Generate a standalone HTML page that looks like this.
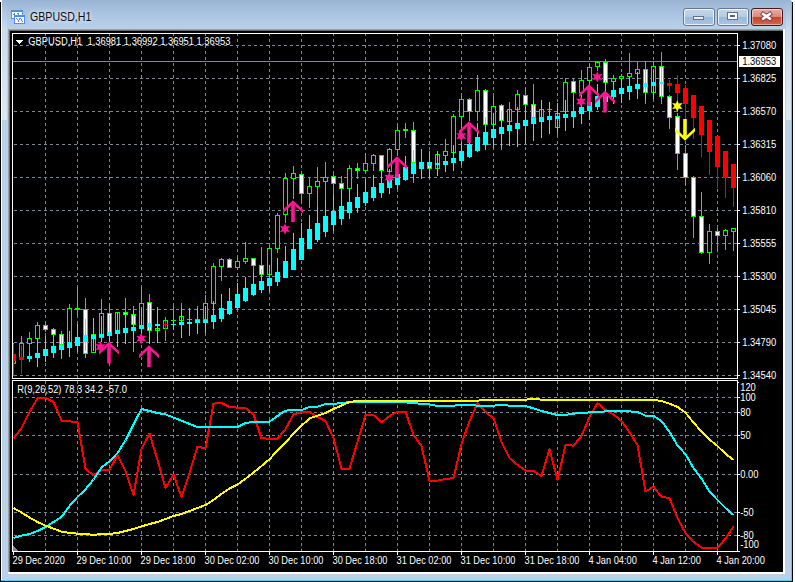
<!DOCTYPE html>
<html><head><meta charset="utf-8"><title>GBPUSD,H1</title>
<style>
html,body{margin:0;padding:0;background:#fff;}
body{width:795px;height:582px;position:relative;overflow:hidden;font-family:"Liberation Sans",sans-serif;}
#win{position:absolute;left:0;top:0;width:793px;height:582px;background:#000;overflow:hidden;}
#frame{position:absolute;left:1px;top:0;width:791px;height:581px;background:#b9d1ea;}
#title{position:absolute;left:1px;top:0;width:791px;height:29px;background:linear-gradient(#9ab5d4,#a9c3e0 45%,#b9d1ea);}
#hl{position:absolute;left:1px;top:0;width:1px;height:581px;background:#fff;}
#hr{position:absolute;left:791px;top:0;width:1px;height:581px;background:#38d8f8;}
#hb{position:absolute;left:1px;top:580px;width:791px;height:1px;background:#38d8f8;}
#sunk{position:absolute;left:8px;top:29px;width:777px;height:545px;background:#fff;}
#sunk1{position:absolute;left:8px;top:29px;width:775px;height:543px;background:#a0a0a0;}
#sunk2{position:absolute;left:9px;top:30px;width:774px;height:542px;background:#696969;}
#client{position:absolute;left:10px;top:31px;width:773px;height:541px;background:#000;}
#ttl{position:absolute;left:30px;top:9px;font-size:12px;line-height:16px;color:#0c0c18;white-space:nowrap;transform-origin:0 0;transform:scaleX(0.885);text-shadow:0 0 5px rgba(255,255,255,.9),0 0 8px rgba(255,255,255,.6);}
.btn{position:absolute;top:8px;width:30px;height:16px;border:1px solid #66788f;border-radius:3px;background:linear-gradient(#c3d6ec 0%,#b4cbe6 48%,#9db9da 52%,#a9c4e2 100%);box-shadow:inset 0 0 0 1px rgba(255,255,255,.75);}
#bx{border-color:#4a1522;background:linear-gradient(#e9aea2 0%,#dc8a79 48%,#c8452a 52%,#d2684c 100%);box-shadow:inset 0 0 0 1px rgba(255,255,255,.45);}
svg{position:absolute;left:0;top:0;}
text{font-family:"Liberation Sans",sans-serif;font-size:10px;fill:#fff;}
</style></head><body>
<div id="win"></div><div id="frame"></div><div id="title"></div>
<div id="hl"></div><div id="hr"></div><div id="hb"></div>
<div id="sunk"></div><div id="sunk1"></div><div id="sunk2"></div><div id="client"></div>
<div style="position:absolute;left:2px;top:0;width:5px;height:120px;background:linear-gradient(rgba(255,255,255,0),rgba(255,255,255,.25) 30%,rgba(255,255,255,.5))"></div>
<div style="position:absolute;left:786px;top:0;width:5px;height:120px;background:linear-gradient(rgba(255,255,255,0),rgba(255,255,255,.25) 30%,rgba(255,255,255,.5))"></div>
<div id="ttl">GBPUSD,H1</div>
<div class="btn" id="bm" style="left:683px"></div>
<div class="btn" id="bq" style="left:717px"></div>
<div class="btn" id="bx" style="left:751px"></div>

<svg width="795" height="582" viewBox="0 0 795 582">
<g shape-rendering="crispEdges">
<rect x="11" y="10" width="12" height="9" fill="#4a86ff"/>
<rect x="12" y="12" width="10" height="6" fill="#fffffa"/>
<rect x="12" y="10" width="1" height="1" fill="#5fa0c8"/>
<rect x="14" y="10" width="1" height="1" fill="#5fa0c8"/>
<rect x="16" y="10" width="1" height="1" fill="#5fa0c8"/>
<rect x="18" y="10" width="1" height="1" fill="#5fa0c8"/>
<rect x="20" y="10" width="1" height="1" fill="#5fa0c8"/>
<rect x="11" y="12" width="1" height="1" fill="#5fa0c8"/>
<rect x="22" y="12" width="1" height="1" fill="#5fa0c8"/>
<rect x="11" y="14" width="1" height="1" fill="#5fa0c8"/>
<rect x="22" y="14" width="1" height="1" fill="#5fa0c8"/>
<rect x="11" y="16" width="1" height="1" fill="#5fa0c8"/>
<rect x="22" y="16" width="1" height="1" fill="#5fa0c8"/>
<rect x="13" y="14" width="1" height="1" fill="#4a86ff"/>
<rect x="14" y="13" width="1" height="1" fill="#4a86ff"/>
<rect x="14" y="14" width="1" height="1" fill="#4a86ff"/>
<rect x="17" y="13" width="1" height="1" fill="#4a86ff"/>
<rect x="18" y="13" width="1" height="1" fill="#4a86ff"/>
<rect x="18" y="14" width="1" height="1" fill="#4a86ff"/>
<rect x="14" y="15" width="11" height="9" fill="#4a86ff"/>
<rect x="15" y="17" width="9" height="6" fill="#fffffa"/>
<rect x="15" y="15" width="1" height="1" fill="#5fa0c8"/>
<rect x="15" y="23" width="1" height="1" fill="#5fa0c8"/>
<rect x="17" y="15" width="1" height="1" fill="#5fa0c8"/>
<rect x="17" y="23" width="1" height="1" fill="#5fa0c8"/>
<rect x="19" y="15" width="1" height="1" fill="#5fa0c8"/>
<rect x="19" y="23" width="1" height="1" fill="#5fa0c8"/>
<rect x="21" y="15" width="1" height="1" fill="#5fa0c8"/>
<rect x="21" y="23" width="1" height="1" fill="#5fa0c8"/>
<rect x="23" y="15" width="1" height="1" fill="#5fa0c8"/>
<rect x="23" y="23" width="1" height="1" fill="#5fa0c8"/>
<rect x="14" y="17" width="1" height="1" fill="#5fa0c8"/>
<rect x="24" y="17" width="1" height="1" fill="#5fa0c8"/>
<rect x="14" y="19" width="1" height="1" fill="#5fa0c8"/>
<rect x="24" y="19" width="1" height="1" fill="#5fa0c8"/>
<rect x="14" y="21" width="1" height="1" fill="#5fa0c8"/>
<rect x="24" y="21" width="1" height="1" fill="#5fa0c8"/>
<rect x="16" y="18" width="1" height="1" fill="#4a86ff"/>
<rect x="17" y="19" width="1" height="1" fill="#4a86ff"/>
<rect x="18" y="20" width="1" height="1" fill="#4a86ff"/>
<rect x="18" y="21" width="1" height="1" fill="#4a86ff"/>
<rect x="19" y="19" width="1" height="1" fill="#4a86ff"/>
<rect x="19" y="18" width="1" height="1" fill="#4a86ff"/>
<rect x="20" y="18" width="1" height="1" fill="#4a86ff"/>
<rect x="21" y="19" width="1" height="1" fill="#4a86ff"/>
<rect x="21" y="20" width="1" height="1" fill="#4a86ff"/>
<rect x="22" y="21" width="1" height="1" fill="#4a86ff"/>
</g>
<g>
<g shape-rendering="crispEdges">
<rect x="693" y="16" width="11" height="4" fill="#62718a"/>
<rect x="694" y="17" width="9" height="2" fill="#eef0f3"/>
<rect x="727" y="12" width="11" height="8" fill="#62718a"/>
<rect x="728" y="13" width="9" height="6" fill="#fff"/>
<rect x="730" y="15" width="5" height="2" fill="#52627c"/>
</g>
<path d="M763.2 14 L769.8 18.6 M769.8 14 L763.2 18.6" stroke="#6a4048" stroke-width="4.4" stroke-linecap="square"/>
<path d="M763.2 14 L769.8 18.6 M769.8 14 L763.2 18.6" stroke="#fff" stroke-width="2.6" stroke-linecap="square"/>
</g>
<g shape-rendering="crispEdges">
<line x1="45.5" y1="33" x2="45.5" y2="551" stroke="#778899" stroke-width="1" stroke-dasharray="3 3"/>
<line x1="77.5" y1="33" x2="77.5" y2="551" stroke="#778899" stroke-width="1" stroke-dasharray="3 3"/>
<line x1="109.5" y1="33" x2="109.5" y2="551" stroke="#778899" stroke-width="1" stroke-dasharray="3 3"/>
<line x1="141.5" y1="33" x2="141.5" y2="551" stroke="#778899" stroke-width="1" stroke-dasharray="3 3"/>
<line x1="173.5" y1="33" x2="173.5" y2="551" stroke="#778899" stroke-width="1" stroke-dasharray="3 3"/>
<line x1="205.5" y1="33" x2="205.5" y2="551" stroke="#778899" stroke-width="1" stroke-dasharray="3 3"/>
<line x1="237.5" y1="33" x2="237.5" y2="551" stroke="#778899" stroke-width="1" stroke-dasharray="3 3"/>
<line x1="269.5" y1="33" x2="269.5" y2="551" stroke="#778899" stroke-width="1" stroke-dasharray="3 3"/>
<line x1="301.5" y1="33" x2="301.5" y2="551" stroke="#778899" stroke-width="1" stroke-dasharray="3 3"/>
<line x1="333.5" y1="33" x2="333.5" y2="551" stroke="#778899" stroke-width="1" stroke-dasharray="3 3"/>
<line x1="365.5" y1="33" x2="365.5" y2="551" stroke="#778899" stroke-width="1" stroke-dasharray="3 3"/>
<line x1="397.5" y1="33" x2="397.5" y2="551" stroke="#778899" stroke-width="1" stroke-dasharray="3 3"/>
<line x1="429.5" y1="33" x2="429.5" y2="551" stroke="#778899" stroke-width="1" stroke-dasharray="3 3"/>
<line x1="461.5" y1="33" x2="461.5" y2="551" stroke="#778899" stroke-width="1" stroke-dasharray="3 3"/>
<line x1="493.5" y1="33" x2="493.5" y2="551" stroke="#778899" stroke-width="1" stroke-dasharray="3 3"/>
<line x1="525.5" y1="33" x2="525.5" y2="551" stroke="#778899" stroke-width="1" stroke-dasharray="3 3"/>
<line x1="557.5" y1="33" x2="557.5" y2="551" stroke="#778899" stroke-width="1" stroke-dasharray="3 3"/>
<line x1="589.5" y1="33" x2="589.5" y2="551" stroke="#778899" stroke-width="1" stroke-dasharray="3 3"/>
<line x1="621.5" y1="33" x2="621.5" y2="551" stroke="#778899" stroke-width="1" stroke-dasharray="3 3"/>
<line x1="653.5" y1="33" x2="653.5" y2="551" stroke="#778899" stroke-width="1" stroke-dasharray="3 3"/>
<line x1="685.5" y1="33" x2="685.5" y2="551" stroke="#778899" stroke-width="1" stroke-dasharray="3 3"/>
<line x1="717.5" y1="33" x2="717.5" y2="551" stroke="#778899" stroke-width="1" stroke-dasharray="3 3"/>
<line x1="14" y1="45.5" x2="737" y2="45.5" stroke="#778899" stroke-width="1" stroke-dasharray="3 3"/>
<line x1="14" y1="78.5" x2="737" y2="78.5" stroke="#778899" stroke-width="1" stroke-dasharray="3 3"/>
<line x1="14" y1="111.5" x2="737" y2="111.5" stroke="#778899" stroke-width="1" stroke-dasharray="3 3"/>
<line x1="14" y1="144.5" x2="737" y2="144.5" stroke="#778899" stroke-width="1" stroke-dasharray="3 3"/>
<line x1="14" y1="177.5" x2="737" y2="177.5" stroke="#778899" stroke-width="1" stroke-dasharray="3 3"/>
<line x1="14" y1="210.5" x2="737" y2="210.5" stroke="#778899" stroke-width="1" stroke-dasharray="3 3"/>
<line x1="14" y1="243.5" x2="737" y2="243.5" stroke="#778899" stroke-width="1" stroke-dasharray="3 3"/>
<line x1="14" y1="276.5" x2="737" y2="276.5" stroke="#778899" stroke-width="1" stroke-dasharray="3 3"/>
<line x1="14" y1="309.5" x2="737" y2="309.5" stroke="#778899" stroke-width="1" stroke-dasharray="3 3"/>
<line x1="14" y1="342.5" x2="737" y2="342.5" stroke="#778899" stroke-width="1" stroke-dasharray="3 3"/>
<line x1="14" y1="375.5" x2="737" y2="375.5" stroke="#778899" stroke-width="1" stroke-dasharray="3 3"/>
<line x1="14" y1="397.5" x2="737" y2="397.5" stroke="#778899" stroke-width="1" stroke-dasharray="3 3"/>
<line x1="14" y1="412.5" x2="737" y2="412.5" stroke="#778899" stroke-width="1" stroke-dasharray="3 3"/>
<line x1="14" y1="435.5" x2="737" y2="435.5" stroke="#778899" stroke-width="1" stroke-dasharray="3 3"/>
<line x1="14" y1="474.5" x2="737" y2="474.5" stroke="#778899" stroke-width="1" stroke-dasharray="3 3"/>
<line x1="14" y1="512.5" x2="737" y2="512.5" stroke="#778899" stroke-width="1" stroke-dasharray="3 3"/>
<line x1="14" y1="535.5" x2="737" y2="535.5" stroke="#778899" stroke-width="1" stroke-dasharray="3 3"/>
<rect x="10" y="379" width="773" height="1" fill="#000"/>
<rect x="13" y="61" width="725" height="1" fill="#778899"/>
</g>
<defs><clipPath id="cm"><rect x="13" y="34" width="724" height="344"/></clipPath><clipPath id="ci"><rect x="13" y="381" width="724" height="170"/></clipPath></defs>
<g shape-rendering="crispEdges" clip-path="url(#cm)">
<rect x="13" y="343" width="1" height="21" fill="#00ff00"/>
<rect x="11" y="355" width="5" height="9" fill="#00ff00"/>
<rect x="12" y="356" width="3" height="7" fill="#000"/>
<rect x="21" y="336" width="1" height="23" fill="#00ff00"/>
<rect x="19" y="343" width="5" height="16" fill="#00ff00"/>
<rect x="20" y="344" width="3" height="14" fill="#000"/>
<rect x="29" y="332" width="1" height="20" fill="#00ff00"/>
<rect x="27" y="338" width="5" height="6" fill="#00ff00"/>
<rect x="28" y="339" width="3" height="4" fill="#000"/>
<rect x="37" y="322" width="1" height="17" fill="#00ff00"/>
<rect x="35" y="325" width="5" height="14" fill="#00ff00"/>
<rect x="36" y="326" width="3" height="12" fill="#000"/>
<rect x="45" y="322" width="1" height="10" fill="#00ff00"/>
<rect x="43" y="325" width="5" height="5" fill="#00ff00"/>
<rect x="44" y="326" width="3" height="3" fill="#fff"/>
<rect x="53" y="328" width="1" height="7" fill="#00ff00"/>
<rect x="51" y="329" width="5" height="6" fill="#00ff00"/>
<rect x="52" y="330" width="3" height="4" fill="#fff"/>
<rect x="61" y="331" width="1" height="28" fill="#00ff00"/>
<rect x="59" y="334" width="5" height="11" fill="#00ff00"/>
<rect x="60" y="335" width="3" height="9" fill="#fff"/>
<rect x="69" y="304" width="1" height="39" fill="#00ff00"/>
<rect x="67" y="308" width="5" height="35" fill="#00ff00"/>
<rect x="68" y="309" width="3" height="33" fill="#000"/>
<rect x="77" y="287" width="1" height="29" fill="#00ff00"/>
<rect x="75" y="308" width="5" height="2" fill="#00ff00"/>
<rect x="85" y="298" width="1" height="60" fill="#00ff00"/>
<rect x="83" y="309" width="5" height="45" fill="#00ff00"/>
<rect x="84" y="310" width="3" height="43" fill="#fff"/>
<rect x="93" y="320" width="1" height="33" fill="#00ff00"/>
<rect x="91" y="334" width="5" height="19" fill="#00ff00"/>
<rect x="92" y="335" width="3" height="17" fill="#000"/>
<rect x="101" y="299" width="1" height="39" fill="#00ff00"/>
<rect x="99" y="313" width="5" height="25" fill="#00ff00"/>
<rect x="100" y="314" width="3" height="23" fill="#000"/>
<rect x="109" y="303" width="1" height="30" fill="#00ff00"/>
<rect x="107" y="313" width="5" height="20" fill="#00ff00"/>
<rect x="108" y="314" width="3" height="18" fill="#fff"/>
<rect x="117" y="312" width="1" height="19" fill="#00ff00"/>
<rect x="115" y="312" width="5" height="19" fill="#00ff00"/>
<rect x="116" y="313" width="3" height="17" fill="#000"/>
<rect x="125" y="298" width="1" height="17" fill="#00ff00"/>
<rect x="123" y="312" width="5" height="3" fill="#00ff00"/>
<rect x="124" y="313" width="3" height="1" fill="#fff"/>
<rect x="133" y="306" width="1" height="46" fill="#00ff00"/>
<rect x="131" y="314" width="5" height="11" fill="#00ff00"/>
<rect x="132" y="315" width="3" height="9" fill="#fff"/>
<rect x="141" y="287" width="1" height="42" fill="#00ff00"/>
<rect x="139" y="303" width="5" height="26" fill="#00ff00"/>
<rect x="140" y="304" width="3" height="24" fill="#000"/>
<rect x="149" y="294" width="1" height="50" fill="#00ff00"/>
<rect x="147" y="302" width="5" height="29" fill="#00ff00"/>
<rect x="148" y="303" width="3" height="27" fill="#fff"/>
<rect x="157" y="328" width="1" height="3" fill="#00ff00"/>
<rect x="155" y="328" width="5" height="3" fill="#00ff00"/>
<rect x="156" y="329" width="3" height="1" fill="#000"/>
<rect x="165" y="317" width="1" height="24" fill="#00ff00"/>
<rect x="163" y="320" width="5" height="9" fill="#00ff00"/>
<rect x="164" y="321" width="3" height="7" fill="#000"/>
<rect x="173" y="306" width="1" height="15" fill="#00ff00"/>
<rect x="171" y="320" width="5" height="1" fill="#00ff00"/>
<rect x="181" y="303" width="1" height="18" fill="#00ff00"/>
<rect x="179" y="316" width="5" height="5" fill="#00ff00"/>
<rect x="180" y="317" width="3" height="3" fill="#000"/>
<rect x="189" y="319" width="1" height="1" fill="#00ff00"/>
<rect x="187" y="319" width="5" height="1" fill="#00ff00"/>
<rect x="197" y="306" width="1" height="16" fill="#00ff00"/>
<rect x="195" y="319" width="5" height="3" fill="#00ff00"/>
<rect x="196" y="320" width="3" height="1" fill="#000"/>
<rect x="205" y="295" width="1" height="25" fill="#00ff00"/>
<rect x="203" y="303" width="5" height="17" fill="#00ff00"/>
<rect x="204" y="304" width="3" height="15" fill="#000"/>
<rect x="213" y="263" width="1" height="41" fill="#00ff00"/>
<rect x="211" y="266" width="5" height="38" fill="#00ff00"/>
<rect x="212" y="267" width="3" height="36" fill="#000"/>
<rect x="221" y="258" width="1" height="23" fill="#00ff00"/>
<rect x="219" y="259" width="5" height="8" fill="#00ff00"/>
<rect x="220" y="260" width="3" height="6" fill="#000"/>
<rect x="229" y="258" width="1" height="10" fill="#00ff00"/>
<rect x="227" y="259" width="5" height="9" fill="#00ff00"/>
<rect x="228" y="260" width="3" height="7" fill="#fff"/>
<rect x="237" y="257" width="1" height="13" fill="#00ff00"/>
<rect x="235" y="261" width="5" height="7" fill="#00ff00"/>
<rect x="236" y="262" width="3" height="5" fill="#000"/>
<rect x="245" y="242" width="1" height="22" fill="#00ff00"/>
<rect x="243" y="258" width="5" height="4" fill="#00ff00"/>
<rect x="244" y="259" width="3" height="2" fill="#000"/>
<rect x="253" y="258" width="1" height="15" fill="#00ff00"/>
<rect x="251" y="258" width="5" height="8" fill="#00ff00"/>
<rect x="252" y="259" width="3" height="6" fill="#fff"/>
<rect x="261" y="247" width="1" height="28" fill="#00ff00"/>
<rect x="259" y="265" width="5" height="10" fill="#00ff00"/>
<rect x="260" y="266" width="3" height="8" fill="#fff"/>
<rect x="269" y="245" width="1" height="30" fill="#00ff00"/>
<rect x="267" y="248" width="5" height="27" fill="#00ff00"/>
<rect x="268" y="249" width="3" height="25" fill="#000"/>
<rect x="277" y="213" width="1" height="40" fill="#00ff00"/>
<rect x="275" y="215" width="5" height="34" fill="#00ff00"/>
<rect x="276" y="216" width="3" height="32" fill="#000"/>
<rect x="285" y="173" width="1" height="50" fill="#00ff00"/>
<rect x="283" y="178" width="5" height="37" fill="#00ff00"/>
<rect x="284" y="179" width="3" height="35" fill="#000"/>
<rect x="293" y="166" width="1" height="33" fill="#00ff00"/>
<rect x="291" y="173" width="5" height="6" fill="#00ff00"/>
<rect x="292" y="174" width="3" height="4" fill="#000"/>
<rect x="301" y="171" width="1" height="30" fill="#00ff00"/>
<rect x="299" y="174" width="5" height="20" fill="#00ff00"/>
<rect x="300" y="175" width="3" height="18" fill="#fff"/>
<rect x="309" y="178" width="1" height="30" fill="#00ff00"/>
<rect x="307" y="186" width="5" height="8" fill="#00ff00"/>
<rect x="308" y="187" width="3" height="6" fill="#000"/>
<rect x="317" y="167" width="1" height="40" fill="#00ff00"/>
<rect x="315" y="181" width="5" height="6" fill="#00ff00"/>
<rect x="316" y="182" width="3" height="4" fill="#000"/>
<rect x="325" y="162" width="1" height="38" fill="#00ff00"/>
<rect x="323" y="177" width="5" height="5" fill="#00ff00"/>
<rect x="324" y="178" width="3" height="3" fill="#000"/>
<rect x="333" y="174" width="1" height="21" fill="#00ff00"/>
<rect x="331" y="176" width="5" height="8" fill="#00ff00"/>
<rect x="332" y="177" width="3" height="6" fill="#fff"/>
<rect x="341" y="176" width="1" height="15" fill="#00ff00"/>
<rect x="339" y="183" width="5" height="6" fill="#00ff00"/>
<rect x="340" y="184" width="3" height="4" fill="#fff"/>
<rect x="349" y="165" width="1" height="24" fill="#00ff00"/>
<rect x="347" y="168" width="5" height="21" fill="#00ff00"/>
<rect x="348" y="169" width="3" height="19" fill="#000"/>
<rect x="357" y="163" width="1" height="16" fill="#00ff00"/>
<rect x="355" y="168" width="5" height="3" fill="#00ff00"/>
<rect x="356" y="169" width="3" height="1" fill="#fff"/>
<rect x="365" y="153" width="1" height="20" fill="#00ff00"/>
<rect x="363" y="163" width="5" height="8" fill="#00ff00"/>
<rect x="364" y="164" width="3" height="6" fill="#000"/>
<rect x="373" y="154" width="1" height="17" fill="#00ff00"/>
<rect x="371" y="155" width="5" height="9" fill="#00ff00"/>
<rect x="372" y="156" width="3" height="7" fill="#000"/>
<rect x="381" y="155" width="1" height="16" fill="#00ff00"/>
<rect x="379" y="155" width="5" height="16" fill="#00ff00"/>
<rect x="380" y="156" width="3" height="14" fill="#fff"/>
<rect x="389" y="148" width="1" height="24" fill="#00ff00"/>
<rect x="387" y="149" width="5" height="23" fill="#00ff00"/>
<rect x="388" y="150" width="3" height="21" fill="#000"/>
<rect x="397" y="126" width="1" height="30" fill="#00ff00"/>
<rect x="395" y="130" width="5" height="20" fill="#00ff00"/>
<rect x="396" y="131" width="3" height="18" fill="#000"/>
<rect x="405" y="123" width="1" height="15" fill="#00ff00"/>
<rect x="403" y="129" width="5" height="2" fill="#00ff00"/>
<rect x="413" y="122" width="1" height="61" fill="#00ff00"/>
<rect x="411" y="130" width="5" height="33" fill="#00ff00"/>
<rect x="412" y="131" width="3" height="31" fill="#fff"/>
<rect x="421" y="162" width="1" height="1" fill="#00ff00"/>
<rect x="419" y="162" width="5" height="1" fill="#00ff00"/>
<rect x="429" y="162" width="1" height="7" fill="#00ff00"/>
<rect x="427" y="162" width="5" height="7" fill="#00ff00"/>
<rect x="428" y="163" width="3" height="5" fill="#fff"/>
<rect x="437" y="154" width="1" height="15" fill="#00ff00"/>
<rect x="435" y="154" width="5" height="15" fill="#00ff00"/>
<rect x="436" y="155" width="3" height="13" fill="#000"/>
<rect x="445" y="139" width="1" height="17" fill="#00ff00"/>
<rect x="443" y="151" width="5" height="5" fill="#00ff00"/>
<rect x="444" y="152" width="3" height="3" fill="#000"/>
<rect x="453" y="114" width="1" height="39" fill="#00ff00"/>
<rect x="451" y="116" width="5" height="37" fill="#00ff00"/>
<rect x="452" y="117" width="3" height="35" fill="#000"/>
<rect x="461" y="96" width="1" height="37" fill="#00ff00"/>
<rect x="459" y="99" width="5" height="18" fill="#00ff00"/>
<rect x="460" y="100" width="3" height="16" fill="#000"/>
<rect x="469" y="98" width="1" height="23" fill="#00ff00"/>
<rect x="467" y="99" width="5" height="13" fill="#00ff00"/>
<rect x="468" y="100" width="3" height="11" fill="#fff"/>
<rect x="477" y="75" width="1" height="46" fill="#00ff00"/>
<rect x="475" y="90" width="5" height="22" fill="#00ff00"/>
<rect x="476" y="91" width="3" height="20" fill="#000"/>
<rect x="485" y="89" width="1" height="36" fill="#00ff00"/>
<rect x="483" y="90" width="5" height="35" fill="#00ff00"/>
<rect x="484" y="91" width="3" height="33" fill="#fff"/>
<rect x="493" y="96" width="1" height="29" fill="#00ff00"/>
<rect x="491" y="106" width="5" height="19" fill="#00ff00"/>
<rect x="492" y="107" width="3" height="17" fill="#000"/>
<rect x="501" y="104" width="1" height="46" fill="#00ff00"/>
<rect x="499" y="105" width="5" height="16" fill="#00ff00"/>
<rect x="500" y="106" width="3" height="14" fill="#fff"/>
<rect x="509" y="102" width="1" height="20" fill="#00ff00"/>
<rect x="507" y="109" width="5" height="13" fill="#00ff00"/>
<rect x="508" y="110" width="3" height="11" fill="#000"/>
<rect x="517" y="90" width="1" height="20" fill="#00ff00"/>
<rect x="515" y="94" width="5" height="16" fill="#00ff00"/>
<rect x="516" y="95" width="3" height="14" fill="#000"/>
<rect x="525" y="87" width="1" height="18" fill="#00ff00"/>
<rect x="523" y="95" width="5" height="10" fill="#00ff00"/>
<rect x="524" y="96" width="3" height="8" fill="#fff"/>
<rect x="533" y="84" width="1" height="34" fill="#00ff00"/>
<rect x="531" y="104" width="5" height="14" fill="#00ff00"/>
<rect x="532" y="105" width="3" height="12" fill="#fff"/>
<rect x="541" y="109" width="1" height="9" fill="#00ff00"/>
<rect x="539" y="109" width="5" height="9" fill="#00ff00"/>
<rect x="540" y="110" width="3" height="7" fill="#000"/>
<rect x="549" y="109" width="1" height="1" fill="#00ff00"/>
<rect x="547" y="109" width="5" height="1" fill="#00ff00"/>
<rect x="557" y="113" width="1" height="22" fill="#00ff00"/>
<rect x="555" y="113" width="5" height="15" fill="#00ff00"/>
<rect x="556" y="114" width="3" height="13" fill="#000"/>
<rect x="565" y="78" width="1" height="34" fill="#00ff00"/>
<rect x="563" y="82" width="5" height="30" fill="#00ff00"/>
<rect x="564" y="83" width="3" height="28" fill="#000"/>
<rect x="573" y="78" width="1" height="19" fill="#00ff00"/>
<rect x="571" y="81" width="5" height="12" fill="#00ff00"/>
<rect x="572" y="82" width="3" height="10" fill="#fff"/>
<rect x="581" y="70" width="1" height="23" fill="#00ff00"/>
<rect x="579" y="80" width="5" height="13" fill="#00ff00"/>
<rect x="580" y="81" width="3" height="11" fill="#000"/>
<rect x="589" y="63" width="1" height="22" fill="#00ff00"/>
<rect x="587" y="67" width="5" height="14" fill="#00ff00"/>
<rect x="588" y="68" width="3" height="12" fill="#000"/>
<rect x="597" y="61" width="1" height="10" fill="#00ff00"/>
<rect x="595" y="62" width="5" height="5" fill="#00ff00"/>
<rect x="596" y="63" width="3" height="3" fill="#000"/>
<rect x="605" y="59" width="1" height="24" fill="#00ff00"/>
<rect x="603" y="62" width="5" height="21" fill="#00ff00"/>
<rect x="604" y="63" width="3" height="19" fill="#fff"/>
<rect x="613" y="75" width="1" height="7" fill="#00ff00"/>
<rect x="611" y="78" width="5" height="4" fill="#00ff00"/>
<rect x="612" y="79" width="3" height="2" fill="#000"/>
<rect x="621" y="74" width="1" height="5" fill="#00ff00"/>
<rect x="619" y="76" width="5" height="3" fill="#00ff00"/>
<rect x="620" y="77" width="3" height="1" fill="#000"/>
<rect x="629" y="53" width="1" height="24" fill="#00ff00"/>
<rect x="627" y="73" width="5" height="4" fill="#00ff00"/>
<rect x="628" y="74" width="3" height="2" fill="#000"/>
<rect x="637" y="62" width="1" height="12" fill="#00ff00"/>
<rect x="635" y="69" width="5" height="5" fill="#00ff00"/>
<rect x="636" y="70" width="3" height="3" fill="#000"/>
<rect x="645" y="61" width="1" height="43" fill="#00ff00"/>
<rect x="643" y="69" width="5" height="24" fill="#00ff00"/>
<rect x="644" y="70" width="3" height="22" fill="#fff"/>
<rect x="653" y="61" width="1" height="32" fill="#00ff00"/>
<rect x="651" y="66" width="5" height="27" fill="#00ff00"/>
<rect x="652" y="67" width="3" height="25" fill="#000"/>
<rect x="661" y="52" width="1" height="52" fill="#00ff00"/>
<rect x="659" y="66" width="5" height="31" fill="#00ff00"/>
<rect x="660" y="67" width="3" height="29" fill="#fff"/>
<rect x="669" y="95" width="1" height="34" fill="#00ff00"/>
<rect x="667" y="96" width="5" height="22" fill="#00ff00"/>
<rect x="668" y="97" width="3" height="20" fill="#fff"/>
<rect x="677" y="113" width="1" height="57" fill="#00ff00"/>
<rect x="675" y="116" width="5" height="38" fill="#00ff00"/>
<rect x="676" y="117" width="3" height="36" fill="#fff"/>
<rect x="685" y="145" width="1" height="40" fill="#00ff00"/>
<rect x="683" y="153" width="5" height="25" fill="#00ff00"/>
<rect x="684" y="154" width="3" height="23" fill="#fff"/>
<rect x="693" y="176" width="1" height="62" fill="#00ff00"/>
<rect x="691" y="177" width="5" height="40" fill="#00ff00"/>
<rect x="692" y="178" width="3" height="38" fill="#fff"/>
<rect x="701" y="192" width="1" height="62" fill="#00ff00"/>
<rect x="699" y="216" width="5" height="37" fill="#00ff00"/>
<rect x="700" y="217" width="3" height="35" fill="#fff"/>
<rect x="709" y="224" width="1" height="40" fill="#00ff00"/>
<rect x="707" y="231" width="5" height="22" fill="#00ff00"/>
<rect x="708" y="232" width="3" height="20" fill="#000"/>
<rect x="717" y="228" width="1" height="23" fill="#00ff00"/>
<rect x="715" y="231" width="5" height="5" fill="#00ff00"/>
<rect x="716" y="232" width="3" height="3" fill="#fff"/>
<rect x="725" y="229" width="1" height="21" fill="#00ff00"/>
<rect x="723" y="230" width="5" height="6" fill="#00ff00"/>
<rect x="724" y="231" width="3" height="4" fill="#000"/>
<rect x="733" y="228" width="1" height="23" fill="#00ff00"/>
<rect x="731" y="228" width="5" height="4" fill="#00ff00"/>
<rect x="732" y="229" width="3" height="2" fill="#000"/>
<rect x="13" y="344" width="1" height="32" fill="#ff0000"/>
<rect x="11" y="354" width="5" height="7" fill="#ff0000"/>
<rect x="21" y="345" width="1" height="29" fill="#ff0000"/>
<rect x="19" y="357" width="5" height="3" fill="#ff0000"/>
<rect x="29" y="352" width="1" height="10" fill="#00ffff"/>
<rect x="27" y="356" width="5" height="3" fill="#00ffff"/>
<rect x="37" y="339" width="1" height="28" fill="#00ffff"/>
<rect x="35" y="353" width="5" height="5" fill="#00ffff"/>
<rect x="45" y="336" width="1" height="26" fill="#00ffff"/>
<rect x="43" y="349" width="5" height="7" fill="#00ffff"/>
<rect x="53" y="335" width="1" height="23" fill="#00ffff"/>
<rect x="51" y="346" width="5" height="7" fill="#00ffff"/>
<rect x="61" y="336" width="1" height="22" fill="#00ffff"/>
<rect x="59" y="345" width="5" height="5" fill="#00ffff"/>
<rect x="69" y="331" width="1" height="26" fill="#00ffff"/>
<rect x="67" y="342" width="5" height="6" fill="#00ffff"/>
<rect x="77" y="324" width="1" height="28" fill="#00ffff"/>
<rect x="75" y="337" width="5" height="9" fill="#00ffff"/>
<rect x="85" y="319" width="1" height="32" fill="#00ffff"/>
<rect x="83" y="335" width="5" height="7" fill="#00ffff"/>
<rect x="93" y="318" width="1" height="33" fill="#00ffff"/>
<rect x="91" y="335" width="5" height="4" fill="#00ffff"/>
<rect x="101" y="316" width="1" height="26" fill="#00ffff"/>
<rect x="99" y="334" width="5" height="3" fill="#00ffff"/>
<rect x="109" y="315" width="1" height="27" fill="#00ffff"/>
<rect x="107" y="332" width="5" height="4" fill="#00ffff"/>
<rect x="117" y="313" width="1" height="34" fill="#00ffff"/>
<rect x="115" y="330" width="5" height="4" fill="#00ffff"/>
<rect x="125" y="315" width="1" height="29" fill="#00ffff"/>
<rect x="123" y="328" width="5" height="5" fill="#00ffff"/>
<rect x="133" y="310" width="1" height="33" fill="#00ffff"/>
<rect x="131" y="327" width="5" height="4" fill="#00ffff"/>
<rect x="141" y="307" width="1" height="28" fill="#00ffff"/>
<rect x="139" y="325" width="5" height="4" fill="#00ffff"/>
<rect x="149" y="305" width="1" height="38" fill="#00ffff"/>
<rect x="147" y="323" width="5" height="4" fill="#00ffff"/>
<rect x="157" y="307" width="1" height="36" fill="#00ffff"/>
<rect x="155" y="324" width="5" height="2" fill="#00ffff"/>
<rect x="165" y="321" width="1" height="10" fill="#ff0000"/>
<rect x="163" y="324" width="5" height="1" fill="#ff0000"/>
<rect x="173" y="321" width="1" height="9" fill="#00ffff"/>
<rect x="171" y="324" width="5" height="1" fill="#00ffff"/>
<rect x="181" y="308" width="1" height="30" fill="#00ffff"/>
<rect x="179" y="322" width="5" height="3" fill="#00ffff"/>
<rect x="189" y="308" width="1" height="28" fill="#00ffff"/>
<rect x="187" y="322" width="5" height="2" fill="#00ffff"/>
<rect x="197" y="308" width="1" height="26" fill="#00ffff"/>
<rect x="195" y="320" width="5" height="3" fill="#00ffff"/>
<rect x="205" y="306" width="1" height="27" fill="#00ffff"/>
<rect x="203" y="320" width="5" height="3" fill="#00ffff"/>
<rect x="213" y="301" width="1" height="28" fill="#00ffff"/>
<rect x="211" y="315" width="5" height="7" fill="#00ffff"/>
<rect x="221" y="294" width="1" height="28" fill="#00ffff"/>
<rect x="219" y="308" width="5" height="11" fill="#00ffff"/>
<rect x="229" y="288" width="1" height="27" fill="#00ffff"/>
<rect x="227" y="301" width="5" height="13" fill="#00ffff"/>
<rect x="237" y="283" width="1" height="26" fill="#00ffff"/>
<rect x="235" y="294" width="5" height="14" fill="#00ffff"/>
<rect x="245" y="277" width="1" height="25" fill="#00ffff"/>
<rect x="243" y="288" width="5" height="13" fill="#00ffff"/>
<rect x="253" y="273" width="1" height="23" fill="#00ffff"/>
<rect x="251" y="284" width="5" height="11" fill="#00ffff"/>
<rect x="261" y="269" width="1" height="24" fill="#00ffff"/>
<rect x="259" y="281" width="5" height="9" fill="#00ffff"/>
<rect x="269" y="265" width="1" height="27" fill="#00ffff"/>
<rect x="267" y="278" width="5" height="8" fill="#00ffff"/>
<rect x="277" y="258" width="1" height="28" fill="#00ffff"/>
<rect x="275" y="272" width="5" height="10" fill="#00ffff"/>
<rect x="285" y="246" width="1" height="32" fill="#00ffff"/>
<rect x="283" y="261" width="5" height="17" fill="#00ffff"/>
<rect x="293" y="233" width="1" height="37" fill="#00ffff"/>
<rect x="291" y="249" width="5" height="21" fill="#00ffff"/>
<rect x="301" y="223" width="1" height="37" fill="#00ffff"/>
<rect x="299" y="238" width="5" height="22" fill="#00ffff"/>
<rect x="309" y="215" width="1" height="34" fill="#00ffff"/>
<rect x="307" y="229" width="5" height="20" fill="#00ffff"/>
<rect x="317" y="207" width="1" height="35" fill="#00ffff"/>
<rect x="315" y="223" width="5" height="17" fill="#00ffff"/>
<rect x="325" y="200" width="1" height="37" fill="#00ffff"/>
<rect x="323" y="216" width="5" height="16" fill="#00ffff"/>
<rect x="333" y="195" width="1" height="36" fill="#00ffff"/>
<rect x="331" y="211" width="5" height="14" fill="#00ffff"/>
<rect x="341" y="191" width="1" height="34" fill="#00ffff"/>
<rect x="339" y="206" width="5" height="13" fill="#00ffff"/>
<rect x="349" y="189" width="1" height="30" fill="#00ffff"/>
<rect x="347" y="202" width="5" height="11" fill="#00ffff"/>
<rect x="357" y="184" width="1" height="29" fill="#00ffff"/>
<rect x="355" y="197" width="5" height="11" fill="#00ffff"/>
<rect x="365" y="179" width="1" height="27" fill="#00ffff"/>
<rect x="363" y="192" width="5" height="11" fill="#00ffff"/>
<rect x="373" y="175" width="1" height="26" fill="#00ffff"/>
<rect x="371" y="187" width="5" height="11" fill="#00ffff"/>
<rect x="381" y="171" width="1" height="27" fill="#00ffff"/>
<rect x="379" y="183" width="5" height="10" fill="#00ffff"/>
<rect x="389" y="169" width="1" height="25" fill="#00ffff"/>
<rect x="387" y="180" width="5" height="8" fill="#00ffff"/>
<rect x="397" y="162" width="1" height="27" fill="#00ffff"/>
<rect x="395" y="174" width="5" height="11" fill="#00ffff"/>
<rect x="405" y="156" width="1" height="25" fill="#00ffff"/>
<rect x="403" y="167" width="5" height="13" fill="#00ffff"/>
<rect x="413" y="150" width="1" height="29" fill="#00ffff"/>
<rect x="411" y="163" width="5" height="11" fill="#00ffff"/>
<rect x="421" y="149" width="1" height="30" fill="#00ffff"/>
<rect x="419" y="162" width="5" height="7" fill="#00ffff"/>
<rect x="429" y="151" width="1" height="27" fill="#00ffff"/>
<rect x="427" y="162" width="5" height="4" fill="#00ffff"/>
<rect x="437" y="151" width="1" height="25" fill="#00ffff"/>
<rect x="435" y="163" width="5" height="2" fill="#00ffff"/>
<rect x="445" y="156" width="1" height="16" fill="#00ffff"/>
<rect x="443" y="161" width="5" height="4" fill="#00ffff"/>
<rect x="453" y="145" width="1" height="26" fill="#00ffff"/>
<rect x="451" y="158" width="5" height="5" fill="#00ffff"/>
<rect x="461" y="141" width="1" height="24" fill="#00ffff"/>
<rect x="459" y="151" width="5" height="10" fill="#00ffff"/>
<rect x="469" y="130" width="1" height="28" fill="#00ffff"/>
<rect x="467" y="144" width="5" height="13" fill="#00ffff"/>
<rect x="477" y="123" width="1" height="29" fill="#00ffff"/>
<rect x="475" y="137" width="5" height="14" fill="#00ffff"/>
<rect x="485" y="117" width="1" height="33" fill="#00ffff"/>
<rect x="483" y="132" width="5" height="13" fill="#00ffff"/>
<rect x="493" y="113" width="1" height="35" fill="#00ffff"/>
<rect x="491" y="129" width="5" height="9" fill="#00ffff"/>
<rect x="501" y="111" width="1" height="37" fill="#00ffff"/>
<rect x="499" y="127" width="5" height="7" fill="#00ffff"/>
<rect x="509" y="110" width="1" height="36" fill="#00ffff"/>
<rect x="507" y="125" width="5" height="6" fill="#00ffff"/>
<rect x="517" y="107" width="1" height="40" fill="#00ffff"/>
<rect x="515" y="123" width="5" height="6" fill="#00ffff"/>
<rect x="525" y="104" width="1" height="40" fill="#00ffff"/>
<rect x="523" y="120" width="5" height="6" fill="#00ffff"/>
<rect x="533" y="101" width="1" height="40" fill="#00ffff"/>
<rect x="531" y="118" width="5" height="6" fill="#00ffff"/>
<rect x="541" y="100" width="1" height="38" fill="#00ffff"/>
<rect x="539" y="117" width="5" height="5" fill="#00ffff"/>
<rect x="549" y="102" width="1" height="32" fill="#00ffff"/>
<rect x="547" y="116" width="5" height="4" fill="#00ffff"/>
<rect x="557" y="103" width="1" height="29" fill="#00ffff"/>
<rect x="555" y="116" width="5" height="3" fill="#00ffff"/>
<rect x="565" y="100" width="1" height="31" fill="#00ffff"/>
<rect x="563" y="114" width="5" height="4" fill="#00ffff"/>
<rect x="573" y="97" width="1" height="31" fill="#00ffff"/>
<rect x="571" y="111" width="5" height="6" fill="#00ffff"/>
<rect x="581" y="95" width="1" height="29" fill="#00ffff"/>
<rect x="579" y="107" width="5" height="7" fill="#00ffff"/>
<rect x="589" y="90" width="1" height="30" fill="#00ffff"/>
<rect x="587" y="102" width="5" height="9" fill="#00ffff"/>
<rect x="597" y="84" width="1" height="26" fill="#00ffff"/>
<rect x="595" y="96" width="5" height="11" fill="#00ffff"/>
<rect x="605" y="80" width="1" height="26" fill="#00ffff"/>
<rect x="603" y="93" width="5" height="9" fill="#00ffff"/>
<rect x="613" y="82" width="1" height="22" fill="#00ffff"/>
<rect x="611" y="90" width="5" height="7" fill="#00ffff"/>
<rect x="621" y="79" width="1" height="24" fill="#00ffff"/>
<rect x="619" y="88" width="5" height="6" fill="#00ffff"/>
<rect x="629" y="77" width="1" height="23" fill="#00ffff"/>
<rect x="627" y="86" width="5" height="6" fill="#00ffff"/>
<rect x="637" y="72" width="1" height="27" fill="#00ffff"/>
<rect x="635" y="84" width="5" height="5" fill="#00ffff"/>
<rect x="645" y="70" width="1" height="30" fill="#00ffff"/>
<rect x="643" y="83" width="5" height="4" fill="#00ffff"/>
<rect x="653" y="69" width="1" height="30" fill="#00ffff"/>
<rect x="651" y="82" width="5" height="4" fill="#00ffff"/>
<rect x="661" y="68" width="1" height="31" fill="#00ffff"/>
<rect x="659" y="82" width="5" height="2" fill="#00ffff"/>
<rect x="669" y="80" width="1" height="12" fill="#ff0000"/>
<rect x="667" y="83" width="5" height="3" fill="#ff0000"/>
<rect x="677" y="75" width="1" height="37" fill="#ff0000"/>
<rect x="675" y="84" width="5" height="9" fill="#ff0000"/>
<rect x="685" y="85" width="1" height="40" fill="#ff0000"/>
<rect x="683" y="88" width="5" height="16" fill="#ff0000"/>
<rect x="693" y="95" width="1" height="44" fill="#ff0000"/>
<rect x="691" y="95" width="5" height="23" fill="#ff0000"/>
<rect x="701" y="106" width="1" height="51" fill="#ff0000"/>
<rect x="699" y="106" width="5" height="29" fill="#ff0000"/>
<rect x="709" y="120" width="1" height="55" fill="#ff0000"/>
<rect x="707" y="120" width="5" height="32" fill="#ff0000"/>
<rect x="717" y="136" width="1" height="52" fill="#ff0000"/>
<rect x="715" y="136" width="5" height="31" fill="#ff0000"/>
<rect x="725" y="151" width="1" height="47" fill="#ff0000"/>
<rect x="723" y="151" width="5" height="27" fill="#ff0000"/>
<rect x="733" y="164" width="1" height="43" fill="#ff0000"/>
<rect x="731" y="164" width="5" height="24" fill="#ff0000"/>
</g>
<g clip-path="url(#cm)">
<polygon points="100.6,341.2 102.0,344.6 105.6,344.1 103.3,347.0 105.6,349.9 102.0,349.4 100.6,352.8 99.2,349.4 95.6,349.9 97.9,347.0 95.6,344.1 99.2,344.6" fill="#ff1493"/>
<polygon points="141.2,332.8 142.6,336.2 146.2,335.7 143.9,338.6 146.2,341.5 142.6,341.0 141.2,344.4 139.8,341.0 136.2,341.5 138.5,338.6 136.2,335.7 139.8,336.2" fill="#ff1493"/>
<polygon points="285.0,223.2 286.4,226.6 290.0,226.1 287.7,229.0 290.0,231.9 286.4,231.4 285.0,234.8 283.6,231.4 280.0,231.9 282.3,229.0 280.0,226.1 283.6,226.6" fill="#ff1493"/>
<polygon points="389.3,171.9 390.7,175.3 394.3,174.8 392.0,177.7 394.3,180.6 390.7,180.1 389.3,183.5 387.9,180.1 384.3,180.6 386.6,177.7 384.3,174.8 387.9,175.3" fill="#ff1493"/>
<polygon points="461.3,130.2 462.7,133.6 466.3,133.1 464.0,136.0 466.3,138.9 462.7,138.4 461.3,141.8 459.9,138.4 456.3,138.9 458.6,136.0 456.3,133.1 459.9,133.6" fill="#ff1493"/>
<polygon points="581.0,95.7 582.4,99.1 586.0,98.6 583.7,101.5 586.0,104.4 582.4,103.9 581.0,107.3 579.6,103.9 576.0,104.4 578.3,101.5 576.0,98.6 579.6,99.1" fill="#ff1493"/>
<polygon points="597.3,71.2 598.7,74.6 602.3,74.1 600.0,77.0 602.3,79.9 598.7,79.4 597.3,82.8 595.9,79.4 592.3,79.9 594.6,77.0 592.3,74.1 595.9,74.6" fill="#ff1493"/>
<polygon points="677.3,100.0 678.7,103.6 682.5,103.0 680.1,106.0 682.5,109.0 678.7,108.4 677.3,112.0 675.9,108.4 672.1,109.0 674.5,106.0 672.1,103.0 675.9,103.6" fill="#ffff00"/>
<polygon points="109.0,341.8 119.0,351.2 119.0,354.8 110.8,347.1 110.8,363.4 107.2,363.4 107.2,347.1 99.0,354.8 99.0,351.2" fill="#ff1493"/>
<polygon points="149.0,345.3 159.0,354.7 159.0,358.3 150.8,350.6 150.8,366.9 147.2,366.9 147.2,350.6 139.0,358.3 139.0,354.7" fill="#ff1493"/>
<polygon points="293.0,200.3 303.0,209.7 303.0,213.3 294.8,205.6 294.8,221.9 291.2,221.9 291.2,205.6 283.0,213.3 283.0,209.7" fill="#ff1493"/>
<polygon points="397.0,156.3 407.0,165.7 407.0,169.3 398.8,161.6 398.8,177.9 395.2,177.9 395.2,161.6 387.0,169.3 387.0,165.7" fill="#ff1493"/>
<polygon points="469.0,121.3 479.0,130.7 479.0,134.3 470.8,126.6 470.8,142.9 467.2,142.9 467.2,126.6 459.0,134.3 459.0,130.7" fill="#ff1493"/>
<polygon points="589.0,84.3 599.0,93.7 599.0,97.3 590.8,89.6 590.8,105.9 587.2,105.9 587.2,89.6 579.0,97.3 579.0,93.7" fill="#ff1493"/>
<polygon points="605.0,90.8 615.0,100.2 615.0,103.8 606.8,96.1 606.8,112.4 603.2,112.4 603.2,96.1 595.0,103.8 595.0,100.2" fill="#ff1493"/>
<polygon points="685.0,140.7 695.0,131.3 695.0,127.7 686.8,135.4 686.8,119.1 683.2,119.1 683.2,135.4 675.0,127.7 675.0,131.3" fill="#ffff00"/>
</g>
<g clip-path="url(#ci)" shape-rendering="crispEdges">
<polyline points="13.5,438.4 21.5,428.0 29.5,412.0 37.5,398.4 45.5,398.0 53.5,402.0 61.5,420.6 69.5,421.4 77.5,422.0 85.5,469.0 93.5,475.0 101.5,470.0 109.5,470.0 117.5,455.0 125.5,471.0 133.5,495.0 141.5,449.0 149.5,433.6 157.5,460.0 165.5,488.0 173.5,474.6 181.5,497.0 189.5,473.0 197.5,446.6 205.5,448.4 213.5,403.6 221.5,403.0 229.5,407.0 237.5,407.6 245.5,408.0 253.5,414.4 261.5,438.4 269.5,438.6 277.5,438.6 285.5,429.0 293.5,414.4 301.5,412.2 309.5,411.8 317.5,417.0 325.5,421.0 333.5,438.0 341.5,468.6 349.5,468.6 357.5,442.0 365.5,415.0 373.5,415.0 381.5,422.4 389.5,416.0 397.5,411.6 405.5,411.6 413.5,435.0 421.5,446.0 429.5,481.0 437.5,480.6 445.5,479.0 453.5,478.2 461.5,444.0 469.5,421.0 477.5,403.0 485.5,412.0 493.5,418.0 501.5,442.0 509.5,458.0 517.5,465.0 525.5,470.6 533.5,471.0 541.5,476.0 549.5,449.0 557.5,480.0 565.5,445.0 573.5,445.6 581.5,436.0 589.5,417.0 597.5,403.0 605.5,410.0 613.5,414.4 621.5,421.0 629.5,432.4 637.5,445.0 645.5,491.5 653.5,486.7 661.5,497.0 669.5,498.0 677.5,518.0 685.5,533.0 693.5,542.0 701.5,547.6 709.5,548.0 717.5,548.0 725.5,538.4 733.5,526.4" fill="none" stroke="#ff0000" stroke-width="2" stroke-linejoin="round"/>
<polyline points="13.5,538.0 21.5,535.6 29.5,534.0 37.5,531.0 45.5,527.0 53.5,522.0 61.5,517.0 69.5,506.0 77.5,497.0 85.5,489.3 93.5,479.5 101.5,467.5 109.5,461.5 117.5,453.0 125.5,440.5 133.5,424.4 141.5,409.0 149.5,411.0 157.5,413.0 165.5,414.4 173.5,417.6 181.5,420.6 189.5,424.0 197.5,427.0 205.5,427.0 213.5,427.0 221.5,427.0 229.5,427.0 237.5,427.0 245.5,423.0 253.5,422.0 261.5,421.6 269.5,421.6 277.5,416.0 285.5,410.6 293.5,410.0 301.5,410.0 309.5,407.0 317.5,406.6 325.5,404.0 333.5,403.6 341.5,403.4 349.5,402.0 357.5,401.8 365.5,401.8 373.5,401.8 381.5,401.8 389.5,401.8 397.5,401.8 405.5,402.4 413.5,403.0 421.5,404.0 429.5,404.4 437.5,406.0 445.5,406.0 453.5,405.6 461.5,405.0 469.5,405.0 477.5,405.6 485.5,405.6 493.5,405.6 501.5,405.0 509.5,405.6 517.5,405.6 525.5,406.0 533.5,408.4 541.5,411.0 549.5,413.0 557.5,415.0 565.5,415.0 573.5,413.6 581.5,413.0 589.5,412.4 597.5,412.0 605.5,411.4 613.5,411.4 621.5,411.4 629.5,411.4 637.5,412.0 645.5,415.6 653.5,416.0 661.5,421.0 669.5,432.0 677.5,445.5 685.5,454.2 693.5,468.0 701.5,478.5 709.5,491.7 717.5,500.0 725.5,508.0 733.5,515.0" fill="none" stroke="#00ffff" stroke-width="2" stroke-linejoin="round"/>
<polyline points="13.5,508.0 21.5,512.4 29.5,517.6 37.5,522.0 45.5,525.6 53.5,528.6 61.5,531.6 69.5,533.0 77.5,533.6 85.5,534.4 93.5,534.6 101.5,534.4 109.5,534.0 117.5,533.0 125.5,531.0 133.5,529.0 141.5,526.4 149.5,524.0 157.5,522.0 165.5,519.0 173.5,516.0 181.5,514.0 189.5,511.0 197.5,508.0 205.5,505.0 213.5,500.0 221.5,493.8 229.5,488.5 237.5,484.5 245.5,478.8 253.5,472.5 261.5,466.0 269.5,459.3 277.5,450.5 285.5,442.5 293.5,433.6 301.5,425.8 309.5,418.4 317.5,415.6 325.5,413.0 333.5,409.0 341.5,405.6 349.5,402.0 357.5,401.0 365.5,400.6 373.5,400.6 381.5,400.6 389.5,400.6 397.5,400.6 405.5,400.6 413.5,400.6 421.5,401.0 429.5,401.4 437.5,401.4 445.5,401.4 453.5,401.0 461.5,400.6 469.5,400.6 477.5,400.6 485.5,400.0 493.5,399.6 501.5,399.6 509.5,399.6 517.5,399.6 525.5,399.6 533.5,399.2 541.5,399.6 549.5,399.6 557.5,399.8 565.5,400.0 573.5,400.0 581.5,400.0 589.5,400.0 597.5,400.0 605.5,400.0 613.5,400.0 621.5,400.0 629.5,400.0 637.5,400.0 645.5,400.0 653.5,400.0 661.5,401.0 669.5,403.6 677.5,407.0 685.5,412.6 693.5,422.6 701.5,431.6 709.5,439.6 717.5,446.0 725.5,453.8 733.5,460.0" fill="none" stroke="#ffff00" stroke-width="2" stroke-linejoin="round"/>
</g>
<g shape-rendering="crispEdges">
<rect x="12" y="33" width="726" height="1" fill="#fff"/>
<rect x="12" y="378" width="726" height="1" fill="#fff"/>
<rect x="12" y="33" width="1" height="346" fill="#fff"/>
<rect x="737" y="33" width="1" height="346" fill="#fff"/>
<rect x="12" y="380" width="726" height="1" fill="#fff"/>
<rect x="12" y="551" width="726" height="1" fill="#fff"/>
<rect x="12" y="380" width="1" height="172" fill="#fff"/>
<rect x="737" y="380" width="1" height="172" fill="#fff"/>
<rect x="738" y="45" width="2" height="1" fill="#fff"/>
<rect x="738" y="78" width="2" height="1" fill="#fff"/>
<rect x="738" y="111" width="2" height="1" fill="#fff"/>
<rect x="738" y="144" width="2" height="1" fill="#fff"/>
<rect x="738" y="177" width="2" height="1" fill="#fff"/>
<rect x="738" y="210" width="2" height="1" fill="#fff"/>
<rect x="738" y="243" width="2" height="1" fill="#fff"/>
<rect x="738" y="276" width="2" height="1" fill="#fff"/>
<rect x="738" y="309" width="2" height="1" fill="#fff"/>
<rect x="738" y="342" width="2" height="1" fill="#fff"/>
<rect x="738" y="375" width="2" height="1" fill="#fff"/>
<rect x="738" y="397" width="2" height="1" fill="#fff"/>
<rect x="738" y="412" width="2" height="1" fill="#fff"/>
<rect x="738" y="435" width="2" height="1" fill="#fff"/>
<rect x="738" y="474" width="2" height="1" fill="#fff"/>
<rect x="738" y="512" width="2" height="1" fill="#fff"/>
<rect x="738" y="535" width="2" height="1" fill="#fff"/>
<rect x="738" y="551" width="2" height="1" fill="#fff"/>
<rect x="738" y="382" width="1" height="1" fill="#fff"/>
<rect x="13" y="552" width="1" height="3" fill="#fff"/>
<rect x="77" y="552" width="1" height="3" fill="#fff"/>
<rect x="141" y="552" width="1" height="3" fill="#fff"/>
<rect x="205" y="552" width="1" height="3" fill="#fff"/>
<rect x="269" y="552" width="1" height="3" fill="#fff"/>
<rect x="333" y="552" width="1" height="3" fill="#fff"/>
<rect x="397" y="552" width="1" height="3" fill="#fff"/>
<rect x="461" y="552" width="1" height="3" fill="#fff"/>
<rect x="525" y="552" width="1" height="3" fill="#fff"/>
<rect x="589" y="552" width="1" height="3" fill="#fff"/>
<rect x="653" y="552" width="1" height="3" fill="#fff"/>
<rect x="717" y="552" width="1" height="3" fill="#fff"/>
<rect x="0" y="0" width="2" height="1" fill="#fff"/>
<rect x="0" y="1" width="1" height="1" fill="#fff"/>
<rect x="791" y="0" width="2" height="1" fill="#fff"/>
<rect x="792" y="1" width="1" height="1" fill="#fff"/>
<rect x="739" y="56" width="41" height="11" fill="#fff"/>
<polygon points="13,546 13,551 18,551" fill="#778899"/>
<polygon points="16,40 23,40 19.5,44" fill="#fff"/>
</g>
<text transform="translate(742.2,49) scale(0.945,1)" xml:space="preserve">1.37080</text>
<text transform="translate(742.2,82) scale(0.945,1)" xml:space="preserve">1.36825</text>
<text transform="translate(742.2,115) scale(0.945,1)" xml:space="preserve">1.36570</text>
<text transform="translate(742.2,148) scale(0.945,1)" xml:space="preserve">1.36315</text>
<text transform="translate(742.2,181) scale(0.945,1)" xml:space="preserve">1.36060</text>
<text transform="translate(742.2,214) scale(0.945,1)" xml:space="preserve">1.35810</text>
<text transform="translate(742.2,247) scale(0.945,1)" xml:space="preserve">1.35555</text>
<text transform="translate(742.2,280) scale(0.945,1)" xml:space="preserve">1.35300</text>
<text transform="translate(742.2,313) scale(0.945,1)" xml:space="preserve">1.35045</text>
<text transform="translate(742.2,346) scale(0.945,1)" xml:space="preserve">1.34790</text>
<text transform="translate(742.2,379) scale(0.945,1)" xml:space="preserve">1.34540</text>
<text transform="translate(742.2,65) scale(0.945,1)" xml:space="preserve" style="fill:#000">1.36953</text>
<text transform="translate(740.2,391) scale(0.935,1)" xml:space="preserve">120</text>
<text transform="translate(740.2,401) scale(0.935,1)" xml:space="preserve">100</text>
<text transform="translate(740.2,416) scale(0.935,1)" xml:space="preserve">80</text>
<text transform="translate(740.2,439) scale(0.935,1)" xml:space="preserve">50</text>
<text transform="translate(740.2,478) scale(0.935,1)" xml:space="preserve">0.00</text>
<text transform="translate(740.2,516) scale(0.935,1)" xml:space="preserve">-50</text>
<text transform="translate(740.2,539) scale(0.935,1)" xml:space="preserve">-80</text>
<text transform="translate(740.2,548) scale(0.935,1)" xml:space="preserve">-100</text>
<text transform="translate(12.5,564) scale(0.925,1)" xml:space="preserve">29 Dec 2020</text>
<text transform="translate(76.5,564) scale(0.925,1)" xml:space="preserve">29 Dec 10:00</text>
<text transform="translate(140.5,564) scale(0.925,1)" xml:space="preserve">29 Dec 18:00</text>
<text transform="translate(204.5,564) scale(0.925,1)" xml:space="preserve">30 Dec 02:00</text>
<text transform="translate(268.5,564) scale(0.925,1)" xml:space="preserve">30 Dec 10:00</text>
<text transform="translate(332.5,564) scale(0.925,1)" xml:space="preserve">30 Dec 18:00</text>
<text transform="translate(396.5,564) scale(0.925,1)" xml:space="preserve">31 Dec 02:00</text>
<text transform="translate(460.5,564) scale(0.925,1)" xml:space="preserve">31 Dec 10:00</text>
<text transform="translate(524.5,564) scale(0.925,1)" xml:space="preserve">31 Dec 18:00</text>
<text transform="translate(588.5,564) scale(0.925,1)" xml:space="preserve">4 Jan 04:00</text>
<text transform="translate(652.5,564) scale(0.925,1)" xml:space="preserve">4 Jan 12:00</text>
<text transform="translate(716.5,564) scale(0.925,1)" xml:space="preserve">4 Jan 20:00</text>
<text transform="translate(28.3,45) scale(0.935,1)" xml:space="preserve">GBPUSD,H1  1.36981 1.36992 1.36951 1.36953</text>
<text transform="translate(17.3,393) scale(0.935,1)" xml:space="preserve">R(9,26,52) 78.3 34.2 -57.0</text>
</svg></body></html>
